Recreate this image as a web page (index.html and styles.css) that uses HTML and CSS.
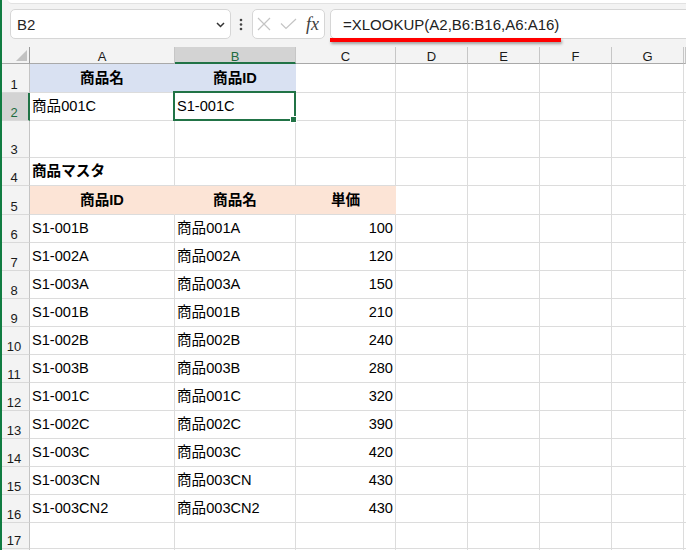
FILE: index.html
```html
<!DOCTYPE html>
<html lang="ja">
<head>
<meta charset="utf-8">
<title>XLOOKUP</title>
<link rel="stylesheet" href="styles.css">
</head>
<body>
<div class="app">
  <div class="ribbon-edge"></div>
  <div class="fbar">
    <div class="namebox">
      <span>B2</span>
      <svg class="chev" width="9" height="6" viewBox="0 0 9 6"><path d="M1 1 L4.5 4.5 L8 1" fill="none" stroke="#333" stroke-width="1.5"/></svg>
    </div>
    <div class="dots"><svg width="4" height="13" viewBox="0 0 4 13"><circle cx="2" cy="2" r="1.3" fill="#444"/><circle cx="2" cy="6.5" r="1.3" fill="#444"/><circle cx="2" cy="11" r="1.3" fill="#444"/></svg></div>
    <div class="fbtns">
      <svg width="14" height="14" viewBox="0 0 14 14"><path d="M1 1 L13 13 M13 1 L1 13" fill="none" stroke="#c4c4c4" stroke-width="1.2"/></svg>
      <svg width="17" height="12" viewBox="0 0 17 12"><path d="M1 5.5 L6 10.5 L16 1" fill="none" stroke="#c4c4c4" stroke-width="1.2"/></svg>
      <span class="fx">fx</span>
    </div>
    <div class="formula">=XLOOKUP(A2,B6:B16,A6:A16)</div>
  </div>

  <div class="sheet">
    <div class="row hdr">
      <div class="corner"><svg width="11" height="11" viewBox="0 0 11 11"><polygon points="11,0 11,11 0,11" fill="#c2c2c2"/></svg></div>
      <div>A</div><div class="hsel">B</div><div>C</div><div>D</div><div>E</div><div>F</div><div>G</div><div></div>
    </div>
    <div class="row r1">
      <div class="rh">1</div>
      <div class="blue b">商品名</div><div class="blue b">商品ID</div><div></div><div></div><div></div><div></div><div></div><div></div>
    </div>
    <div class="row">
      <div class="rh rsel">2</div>
      <div>商品001C</div><div>S1-001C</div><div></div><div></div><div></div><div></div><div></div><div></div>
    </div>
    <div class="row r3">
      <div class="rh">3</div>
      <div></div><div></div><div></div><div></div><div></div><div></div><div></div><div></div>
    </div>
    <div class="row">
      <div class="rh">4</div>
      <div class="bl">商品マスタ</div><div></div><div></div><div></div><div></div><div></div><div></div><div></div>
    </div>
    <div class="row r5">
      <div class="rh">5</div>
      <div class="peach b">商品ID</div><div class="peach b">商品名</div><div class="peach b">単価</div><div></div><div></div><div></div><div></div><div></div>
    </div>
    <div class="row">
      <div class="rh">6</div>
      <div>S1-001B</div><div>商品001A</div><div class="r">100</div><div></div><div></div><div></div><div></div><div></div>
    </div>
    <div class="row">
      <div class="rh">7</div>
      <div>S1-002A</div><div>商品002A</div><div class="r">120</div><div></div><div></div><div></div><div></div><div></div>
    </div>
    <div class="row">
      <div class="rh">8</div>
      <div>S1-003A</div><div>商品003A</div><div class="r">150</div><div></div><div></div><div></div><div></div><div></div>
    </div>
    <div class="row">
      <div class="rh">9</div>
      <div>S1-001B</div><div>商品001B</div><div class="r">210</div><div></div><div></div><div></div><div></div><div></div>
    </div>
    <div class="row">
      <div class="rh">10</div>
      <div>S1-002B</div><div>商品002B</div><div class="r">240</div><div></div><div></div><div></div><div></div><div></div>
    </div>
    <div class="row">
      <div class="rh">11</div>
      <div>S1-003B</div><div>商品003B</div><div class="r">280</div><div></div><div></div><div></div><div></div><div></div>
    </div>
    <div class="row">
      <div class="rh">12</div>
      <div>S1-001C</div><div>商品001C</div><div class="r">320</div><div></div><div></div><div></div><div></div><div></div>
    </div>
    <div class="row">
      <div class="rh">13</div>
      <div>S1-002C</div><div>商品002C</div><div class="r">390</div><div></div><div></div><div></div><div></div><div></div>
    </div>
    <div class="row">
      <div class="rh">14</div>
      <div>S1-003C</div><div>商品003C</div><div class="r">420</div><div></div><div></div><div></div><div></div><div></div>
    </div>
    <div class="row">
      <div class="rh">15</div>
      <div>S1-003CN</div><div>商品003CN</div><div class="r">430</div><div></div><div></div><div></div><div></div><div></div>
    </div>
    <div class="row">
      <div class="rh">16</div>
      <div>S1-003CN2</div><div>商品003CN2</div><div class="r">430</div><div></div><div></div><div></div><div></div><div></div>
    </div>
    <div class="row r17">
      <div class="rh">17</div>
      <div></div><div></div><div></div><div></div><div></div><div></div><div></div><div></div>
    </div>
    <div class="row">
      <div class="rh"></div>
      <div></div><div></div><div></div><div></div><div></div><div></div><div></div><div></div>
    </div>
  </div>

  <div class="sel"><span class="handle"></span></div>
  <div class="redline"></div>
</div>
</body>
</html>
```

FILE: styles.css
```css
* { box-sizing: border-box; }
html, body { margin: 0; padding: 0; }
body {
  width: 686px;
  height: 550px;
  overflow: hidden;
  background: #fff;
  font-family: "Liberation Sans", "Noto Sans CJK JP", sans-serif;
}
.app {
  position: relative;
  height: 550px;
  border-left: 2px solid #107c41;
  background: #f3f3f3;
  overflow: hidden;
}
.ribbon-edge {
  height: 4px;
  margin-left: 6px;
  background: #fff;
  border-bottom: 1px solid #e2e2e2;
  border-bottom-left-radius: 6px;
}
.fbar {
  display: flex;
  align-items: center;
  height: 30px;
  margin-top: 5px;
  padding-left: 8px;
}
.namebox {
  width: 221px;
  height: 30px;
  background: #fff;
  border: 1px solid #d6d6d6;
  border-radius: 5px;
  display: flex;
  align-items: center;
  justify-content: space-between;
  padding: 0 5px 0 6px;
  font-size: 15px;
  color: #262626;
}
.chev { margin-top: 1px; }
.dots {
  margin-left: 8px;
  width: 4px;
  display: flex;
  margin-top: 1px;
}
.fbtns {
  margin-left: 9px;
  width: 73px;
  height: 30px;
  background: #fff;
  border: 1px solid #d6d6d6;
  border-radius: 5px;
  display: flex;
  align-items: center;
  gap: 9px;
  padding-left: 4px;
}
.fx {
  font-family: "Liberation Serif", serif;
  font-style: italic;
  font-size: 18px;
  line-height: 18px;
  color: #404040;
}
.formula {
  margin-left: 5px;
  margin-right: -12px;
  flex: 1;
  height: 30px;
  background: #fff;
  border: 1px solid #d6d6d6;
  border-radius: 5px;
  padding-left: 12px;
  display: flex;
  align-items: center;
  font-size: 15px;
  color: #222;
}
.sheet {
  margin-top: 8px;
}
.row {
  display: grid;
  grid-template-columns: 28px 145px 121px 100px 72px 72px 72px 72px 1fr;
  height: 28px;
}
.row > div {
  border-right: 1px solid #dcdcdc;
  border-bottom: 1px solid #dcdcdc;
  background: #fff;
  display: flex;
  align-items: center;
  padding: 0 2px;
  font-size: 14.6px;
  line-height: 17px;
  white-space: nowrap;
  overflow: hidden;
  color: #000;
}
.r1 { height: 29px; }
.r3 { height: 37px; }
.r5 { height: 29px; }
.r17 { height: 26px; }

.hdr { height: 17px; }
.hdr > div {
  background: #f3f3f3;
  border-right-color: #c6c6c6;
  border-bottom-color: #a9a9a9;
  justify-content: center;
  align-items: flex-end;
  font-size: 13px;
  line-height: 11px;
  padding: 0 0 1px;
  color: #1a1a1a;
}
.hdr > .corner {
  justify-content: flex-end;
  padding: 0 2px 2px 0;
  border-right-color: #9a9a9a;
}
.hdr > .hsel {
  background: #d3d3d3;
  border-bottom: 2px solid #217346;
  color: #1e6b40;
  padding-bottom: 0;
}
.row > .rh {
  background: #f3f3f3;
  border-right-color: #c4c4c4;
  border-bottom-color: #d9d9d9;
  justify-content: center;
  align-items: flex-end;
  font-size: 13px;
  line-height: 13px;
  padding: 0 3px 1px 0;
  color: #1a1a1a;
}
.row > .rsel {
  background: #d3d3d3;
  border-right: 2px solid #217346;
  color: #1e6b40;
  padding-right: 2px;
}
.row > .blue {
  background: #d9e1f2;
  border-right-color: #d9e1f2;
}
.row > .peach {
  background: #fce4d6;
  border-right-color: #fce4d6;
}
.row > .b {
  font-weight: 700;
  justify-content: center;
}
.row > .bl {
  font-weight: 700;
}
.row > .r {
  justify-content: flex-end;
}
.sel {
  position: absolute;
  left: 171px;
  top: 91px;
  width: 123px;
  height: 30px;
  border: 2px solid #217346;
}
.handle {
  position: absolute;
  right: -3px;
  bottom: -4px;
  width: 7px;
  height: 7px;
  background: #217346;
  border: 1px solid #fff;
}
.redline {
  position: absolute;
  left: 328px;
  top: 38px;
  width: 231px;
  height: 4px;
  background: #ff0000;
  box-shadow: 1px 2px 3px rgba(0, 0, 0, 0.35);
}
```
